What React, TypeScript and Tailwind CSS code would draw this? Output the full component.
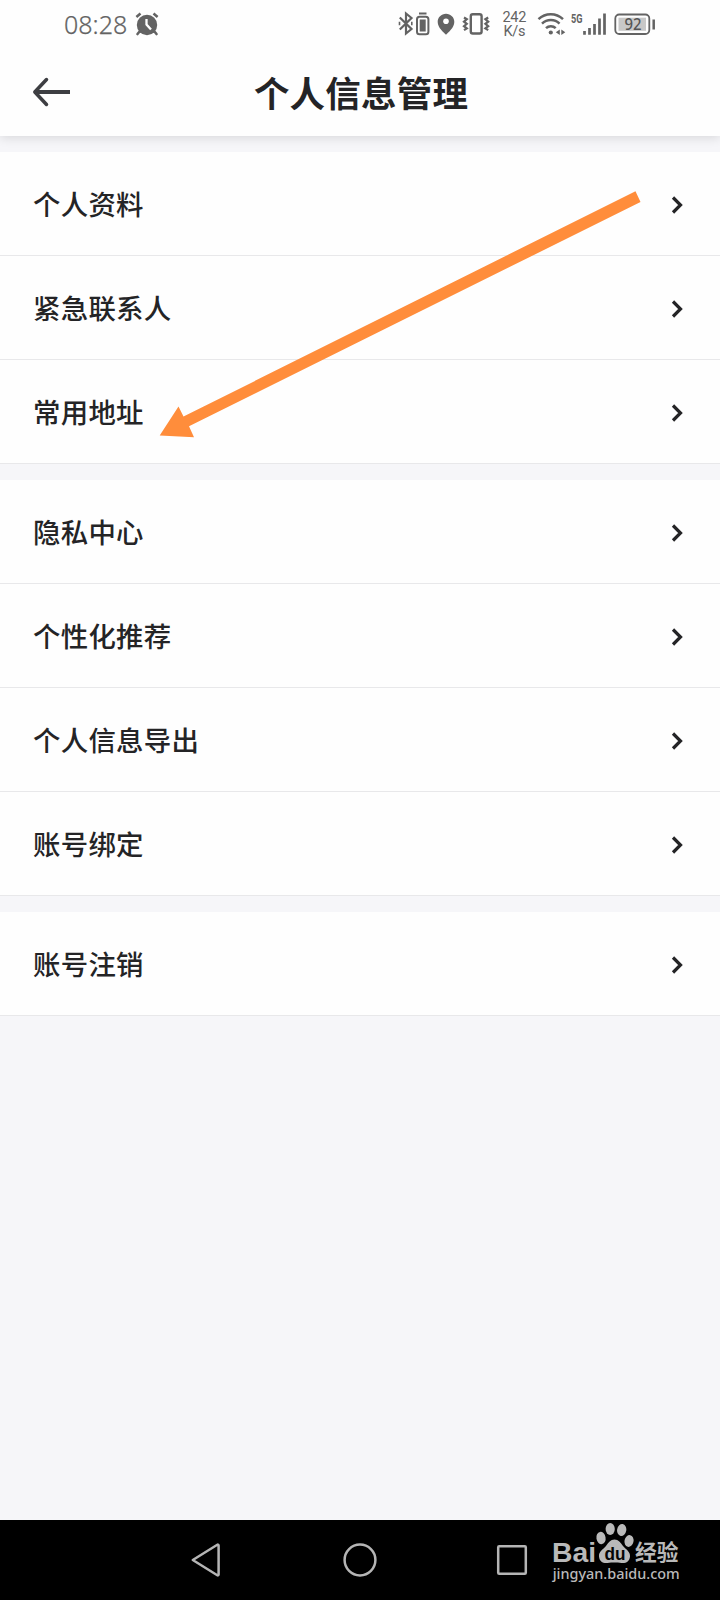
import React from "react";

const groups: string[][] = [
  ["个人资料", "紧急联系人", "常用地址"],
  ["隐私中心", "个性化推荐", "个人信息导出", "账号绑定"],
  ["账号注销"],
];

function AlarmIcon() {
  return (
    <svg className="ml-[8px] mt-[-2px] h-[24px] w-[24px]" viewBox="0 0 24 24" fill="none">
      <circle cx="12" cy="13" r="10.2" fill="#636363" />
      <path d="M1.400 5 5.500 1.600M22.600 5 18.500 1.600" stroke="#636363" strokeWidth="2.600" />
      <path d="m5 19-2.500 3M19 19l2.500 3" stroke="#636363" strokeWidth="2.600" strokeLinecap="round" />
      <path d="M11.500 7v5.500l4.500 5" stroke="#fff" strokeWidth="2.300" />
    </svg>
  );
}

function StatusIcons() {
  return (
    <svg className="h-[50px] w-[270px]" viewBox="390 0 270 50" fill="none" stroke="#636363">
      <path d="m399.800 17.500 11.700 11.500-5.500 4.500V13.500l5.500 4.500-11.700 11.500" strokeWidth="2.200" />
      <path d="M399.500 21.800v3.400M411.800 21.800v3.400" strokeWidth="1.600" />
      <path d="M419 13.500h7.500" strokeWidth="2" />
      <rect x="417" y="16.800" width="11.400" height="17.400" rx="2.500" strokeWidth="2" />
      <rect x="419.700" y="19.500" width="6" height="12" fill="#636363" stroke="none" />
      <path d="M446 13.800c-4.700 0-8.300 3.600-8.300 8.200 0 5.500 6 10.600 8.300 12.700 2.300-2.100 8.300-7.200 8.300-12.700 0-4.600-3.600-8.200-8.300-8.200Z" fill="#636363" stroke="none" />
      <circle cx="446" cy="21.300" r="2.800" fill="#fff" stroke="none" />
      <rect x="470.800" y="14.300" width="10.800" height="19.200" rx="2" strokeWidth="2.400" />
      <path d="m464 17.500 2.800 1.700-2.800 2.400 2.800 2.200-2.800 2.400 2.800 2.200-2.800 1.700M488.200 17.500l-2.800 1.700 2.800 2.400-2.800 2.200 2.800 2.400-2.800 2.200 2.800 1.700" strokeWidth="2.200" />
      <g fill="#636363" stroke="none" fontFamily="Roboto, sans-serif">
        <text x="502.400" y="21.700" fontSize="14.500" textLength="24">242</text>
        <text x="503.500" y="35.700" fontSize="14.500" textLength="22">K/s</text>
        <text x="571" y="23" fontSize="12" fontWeight="700" textLength="11.500" lengthAdjust="spacingAndGlyphs">5G</text>
      </g>
      <path d="M538.500 19.200c7-6.500 17.500-6.500 24.500 0M542 23.700c5-4.800 12.800-4.800 17.500 0M546 28.100c2.700-2.600 7-2.600 9.700 0" strokeWidth="2.500" />
      <circle cx="550.800" cy="32.500" r="2.100" fill="#636363" stroke="none" />
      <path d="m559.800 29.500-4 2.700 4 2.700ZM561.300 29.500l4 2.700-4 2.700Z" fill="#636363" stroke="none" />
      <path d="M584.500 31v3.800M589.500 28v6.800M594.500 24v10.800M599.500 18.500v16.300M604.500 13.500v21.300" strokeWidth="2.700" />
      <rect x="615.300" y="14.500" width="34" height="19.500" rx="4" strokeWidth="1.800" />
      <rect x="618.500" y="17.700" width="27.500" height="13.100" fill="#c8c8c8" stroke="none" />
      <path d="M653.700 19.500v10" strokeWidth="2.500" />
      <text x="624.500" y="29.500" fill="#555" stroke="none" fontFamily="Noto Sans, sans-serif" fontSize="15.500" fontWeight="500" textLength="17" lengthAdjust="spacingAndGlyphs">92</text>
    </svg>
  );
}

function BackArrow() {
  return (
    <svg className="h-[30px] w-[39px]" viewBox="0 0 39 30" fill="none" stroke="#3d3e42">
      <path d="M2.500 15H38" strokeWidth="4" />
      <path d="M14.500 2.500 2.800 15 14.500 27.500" strokeWidth="3.500" strokeLinejoin="round" strokeLinecap="round" />
    </svg>
  );
}

function Row({ label }: { label: string }) {
  return (
    <li className="flex h-[104px] items-center justify-between border-b border-[#e8e8ea] bg-[#fefefe] pl-[33px] pr-[37px]">
      <span className="-mt-px text-[27.4px] font-medium leading-[40px] tracking-[0.3px]">{label}</span>
      <svg className="mt-[2px] h-[18px] w-[12px]" viewBox="0 0 12 18" fill="none" stroke="#242426">
        <path d="m2 1.500 7.500 7.500L2 16.500" strokeWidth="3.200" />
      </svg>
    </li>
  );
}

function BaiduMark() {
  return (
    <svg className="absolute left-[540px] top-[1520px] h-[80px] w-[160px]" viewBox="540 1520 160 80" fill="#b9b9b9">
      <text x="552" y="1561.500" fontFamily="Liberation Sans, sans-serif" fontWeight="700" fontSize="28" textLength="44" lengthAdjust="spacingAndGlyphs">Bai</text>
      <ellipse cx="601" cy="1538" rx="4.600" ry="6.200" transform="rotate(-10 601 1538)" />
      <ellipse cx="610.200" cy="1529" rx="4.600" ry="6" />
      <ellipse cx="621.700" cy="1530" rx="4.600" ry="6" transform="rotate(10 621.700 1530)" />
      <ellipse cx="629" cy="1541" rx="4.500" ry="6" transform="rotate(12 629 1541)" />
      <path d="M614.500 1539.500c-4 0-6 3-8.500 6.500-3 3.500-7.500 5.500-7 10.500.4 5 4 7 8.500 6.500 5-.6 9-.6 14 0 4.500.5 8-1.500 8.500-6.500.4-5-4-7-7-10.500-2.500-3.500-4.500-6.500-8.500-6.500Z" />
      <text x="604.500" y="1559.500" fill="#050505" fontFamily="Liberation Sans, sans-serif" fontWeight="700" fontSize="18" textLength="21" lengthAdjust="spacingAndGlyphs">du</text>
      <text x="635" y="1560.300" fontFamily="Noto Sans CJK SC, sans-serif" fontWeight="700" fontSize="22" textLength="43.500" lengthAdjust="spacingAndGlyphs">经验</text>
      <text x="552.700" y="1579" fontFamily="Noto Sans, sans-serif" fontWeight="500" fontSize="14" textLength="127" lengthAdjust="spacingAndGlyphs">jingyan.baidu.com</text>
    </svg>
  );
}

export default function App() {
  return (
    <div className="relative flex h-[1600px] w-[720px] flex-col overflow-hidden bg-[#f6f6f9] font-['Noto_Sans_CJK_SC',sans-serif] text-[#242426]">
      <header className="relative h-[136px] shrink-0 bg-[#fefefe] shadow-[0_2px_10px_rgba(0,0,0,0.12)]">
        <div className="flex h-[50px] justify-between pl-[64px] pr-[60px]">
          <div className="flex h-[50px] items-center text-[#636363]">
            <span className="-mt-[2px] w-[63px] whitespace-nowrap font-['Noto_Sans',sans-serif] text-[25px] font-light leading-[50px] [-webkit-text-stroke:0.25px_#636363]">08:28</span>
            <AlarmIcon />
          </div>
          <StatusIcons />
        </div>
        <div className="grid h-[84px] grid-cols-[1fr_auto_1fr] items-center pl-[32px] pr-[30px]">
          <BackArrow />
          <h1 className="-mt-px text-[35.5px] font-bold leading-[50px] tracking-[0.2px]">个人信息管理</h1>
        </div>
      </header>
      <main className="flex grow flex-col gap-4 pt-4">
        {groups.map((labels) => (
          <ul key={labels[0]}>
            {labels.map((label) => (
              <Row key={label} label={label} />
            ))}
          </ul>
        ))}
      </main>
      <nav className="flex h-[80px] shrink-0 items-center bg-black pl-[190px]">
        <svg className="h-[36px] w-[340px]" viewBox="190 1542 340 36" fill="none" stroke="#b5b5b5" strokeWidth="2.500" strokeLinejoin="round">
          <path d="M192.800 1560 217.300 1544.800c.7-.4 1.300 0 1.300.7v29c0 .7-.6 1.100-1.300.7Z" />
          <circle cx="360" cy="1560" r="15.400" />
          <rect x="498.200" y="1546.200" width="27.600" height="27.600" rx="1" />
        </svg>
      </nav>
      <svg className="absolute left-[150px] top-[180px] h-[270px] w-[500px]" viewBox="150 180 500 270">
        <path d="M159.700 435.500 178.500 406.500 183.500 416.500 635.500 191.300 640.500 202 189 426.300 194 437.300Z" fill="#ff8d3b" />
      </svg>
      <BaiduMark />
    </div>
  );
}
